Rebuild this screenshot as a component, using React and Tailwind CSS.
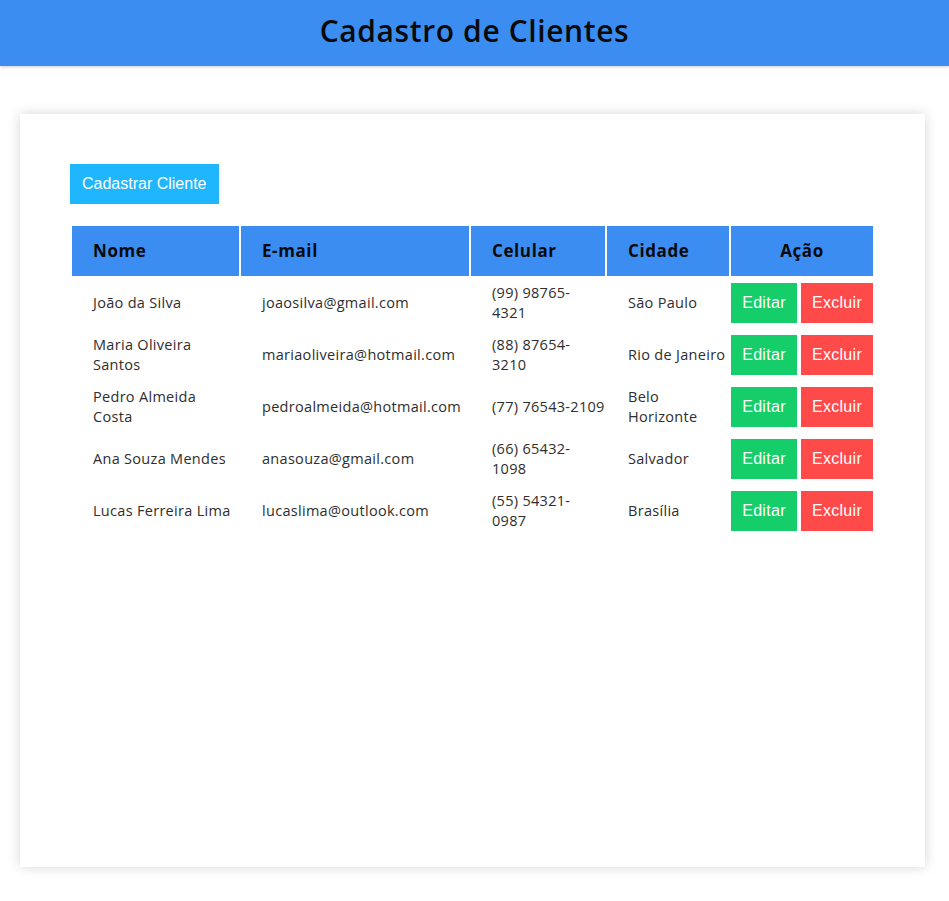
const clientes = [
  { nome: ['João da Silva'], email: 'joaosilva@gmail.com', celular: ['(99) 98765-', '4321'], cidade: ['São Paulo'] },
  { nome: ['Maria Oliveira', 'Santos'], email: 'mariaoliveira@hotmail.com', celular: ['(88) 87654-', '3210'], cidade: ['Rio de Janeiro'] },
  { nome: ['Pedro Almeida', 'Costa'], email: 'pedroalmeida@hotmail.com', celular: ['(77) 76543-2109'], cidade: ['Belo', 'Horizonte'] },
  { nome: ['Ana Souza Mendes'], email: 'anasouza@gmail.com', celular: ['(66) 65432-', '1098'], cidade: ['Salvador'] },
  { nome: ['Lucas Ferreira Lima'], email: 'lucaslima@outlook.com', celular: ['(55) 54321-', '0987'], cidade: ['Brasília'] },
];

const btn = "h-10 text-white text-[16px] font-['Liberation_Sans',Arial,sans-serif]";

// cell text is kept on the same lines as the original layout
function Lines({ lines }) {
  return lines.map((l, i) => (
    <span key={i} className="block whitespace-nowrap">{l}</span>
  ));
}

export default function App() {
  return (
    <div className="min-h-[901px] bg-white font-['Open_Sans',sans-serif]">
      {/* Header */}
      <header className="h-[66px] bg-[#3c8df1] flex items-center justify-center pb-[5px] shadow-[0_1px_3px_rgba(0,0,0,0.2)]">
        <h1 className="text-[30px] font-semibold tracking-[0.6px] text-[#0a0a0a]">Cadastro de Clientes</h1>
      </header>

      {/* Card */}
      <main className="ml-5 mt-12 w-[905px] h-[753px] bg-white shadow-[0_0_12px_rgba(0,0,0,0.16)] p-[50px]">
        <button className={`${btn} bg-[#1fb6fe] px-[12px]`}>Cadastrar Cliente</button>

        <table className="mt-5 w-full table-fixed border-separate border-spacing-[2px]">
          <thead>
            <tr className="h-[50px] bg-[#3c8df1] text-[17px] font-semibold tracking-[0.6px] text-[#0a0a0a]">
              <th className="w-[167px] text-left pl-[21px]">Nome</th>
              <th className="w-[228px] text-left pl-[21px]">E-mail</th>
              <th className="w-[134px] text-left pl-[21px]">Celular</th>
              <th className="w-[122px] text-left pl-[21px]">Cidade</th>
              <th className="w-[142px] text-center">Ação</th>
            </tr>
          </thead>
          <tbody className="text-[14.5px] leading-[20px] text-[#2e2e2e] tracking-[0.3px]">
            {clientes.map((c) => (
              <tr key={c.email} className="h-[50px]">
                <td className="pl-[21px]"><Lines lines={c.nome} /></td>
                <td className="pl-[21px] whitespace-nowrap">{c.email}</td>
                <td className="pl-[21px]"><Lines lines={c.celular} /></td>
                <td className="pl-[21px]"><Lines lines={c.cidade} /></td>
                <td>
                  <div className="flex gap-1">
                    <button className={`${btn} bg-[#15cd69] w-[66px]`}>Editar</button>
                    <button className={`${btn} bg-[#ff4a4a] w-[72px]`}>Excluir</button>
                  </div>
                </td>
              </tr>
            ))}
          </tbody>
        </table>
      </main>
    </div>
  );
}
